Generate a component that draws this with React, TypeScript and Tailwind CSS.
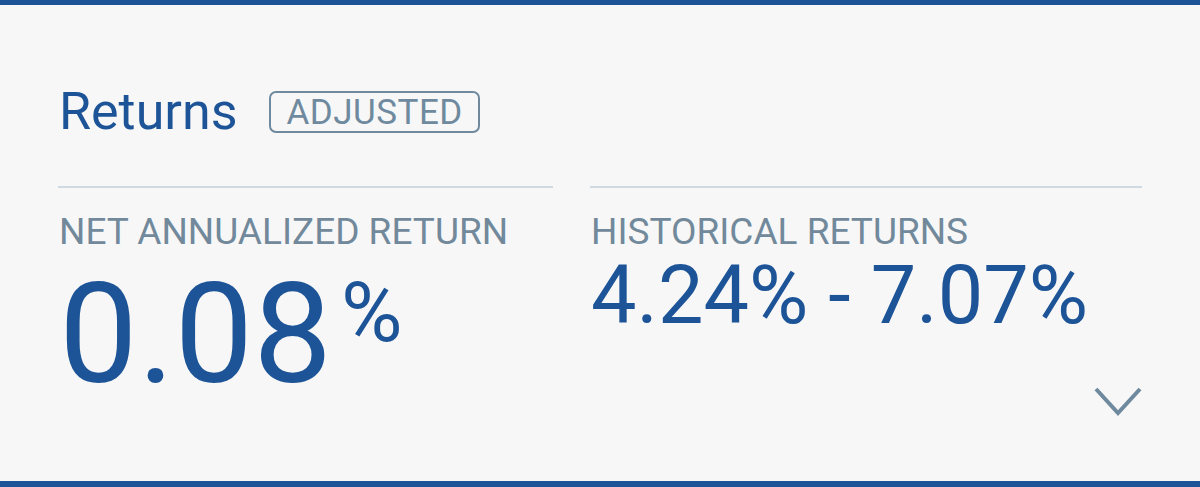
const font = { fontFamily: 'Roboto, "Liberation Sans", sans-serif' }

export default function App() {
  return (
    <div
      className="flex h-[487px] w-full flex-col bg-[#f7f7f7] text-[#1d5497]"
      style={font}>
      <div className="h-[5px] bg-[#1d5497]" />

      <div className="flex-1 pl-[58px] pr-[58px]">
        <div className="mt-[81px] flex items-center pl-[1px]">
          <h2 className="text-[52px] leading-none font-normal">Returns</h2>
          <span className="ml-[32px] flex h-[42px] items-center rounded-[7px] border-2 border-[#6f8a9e] px-[15px] text-[35px] leading-none tracking-[0.5px] text-[#6f8a9e]">
            ADJUSTED
          </span>
        </div>

        <div className="mt-[48px] grid grid-cols-[495px_552px] gap-x-[37px]">
          <div className="border-t-2 border-[#cfd9e0] pl-[1px]">
            <p className="mt-[25px] text-[37px] leading-none text-[#71899b]">
              NET ANNUALIZED RETURN
            </p>
            <div className="mt-[14px] flex items-start">
              <span className="text-[140px] leading-none">0.08</span>
              <span className="ml-[9px] mt-[7px] text-[84px] leading-none">%</span>
            </div>
          </div>

          <div className="border-t-2 border-[#cfd9e0] pl-[1px]">
            <p className="mt-[25px] text-[37px] leading-none text-[#71899b]">
              HISTORICAL RETURNS
            </p>
            <p className="mt-[5px] text-[81px] leading-none">4.24% - 7.07%</p>
            <div className="mt-[50px] flex justify-end">
              <svg
                width="48"
                height="31"
                viewBox="0 0 48 31"
                fill="none"
                stroke="#6f8a9e"
                strokeWidth="4">
                <polyline points="2,3 24,27 46,3" />
              </svg>
            </div>
          </div>
        </div>
      </div>

      <div className="h-[6px] bg-[#1d5497]" />
    </div>
  )
}
